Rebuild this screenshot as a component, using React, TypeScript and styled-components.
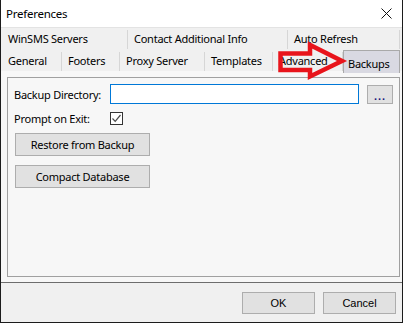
import React from "react";
import styled, { createGlobalStyle } from "styled-components";

const Global = createGlobalStyle`
  html, body { margin: 0; padding: 0; background: #ffffff; }
  body { width: 403px; height: 323px; overflow: hidden; }
  * { box-sizing: border-box; }
`;

const UI_FONT = `"Noto Sans", "Open Sans", sans-serif`;

const Window = styled.div`
  position: relative;
  width: 403px;
  height: 323px;
  border-left: 1px solid #1c1c1c;
  border-right: 1px solid #1c1c1c;
  border-bottom: 1px solid #1c1c1c;
  background: #f7f7f7;
  display: flex;
  flex-direction: column;
  font-family: ${UI_FONT};
  font-size: 11px;
  letter-spacing: -0.25px;
  color: #000;
`;

const TitleBar = styled.div`
  height: 27px;
  background: #ffffff;
  display: flex;
  align-items: center;
  justify-content: space-between;
  padding: 0 10px 1px 5px;
  font-size: 11.5px;
`;

const TabStrip = styled.div`
  background: #f0f0f0;
  border-top: 1px solid #e3e3e3;
  padding: 1px 0 0 1px;
  height: 44px;
  display: flex;
  flex-direction: column;
`;

const TabRow = styled.div<{ $h: number }>`
  display: flex;
  height: ${(p) => p.$h}px;
  align-items: flex-end;
`;

const Tab = styled.div<{ $w: number; $active?: boolean }>`
  width: ${(p) => p.$w}px;
  height: ${(p) => (p.$active ? 23 : 19)}px;
  padding-left: ${(p) => (p.$active ? 4 : 6)}px;
  padding-top: ${(p) => (p.$active ? 2 : 0)}px;
  padding-bottom: ${(p) => (p.$active ? 0 : 3)}px;
  display: flex;
  align-items: center;
  white-space: nowrap;
  overflow: hidden;
  background: ${(p) => (p.$active ? "#d9d9e2" : "transparent")};
  border-right: 1px solid ${(p) => (p.$active ? "#a9a9a9" : "#d6d6d6")};
  border-left: ${(p) => (p.$active ? "1px solid #a9a9a9" : "none")};
  border-top: ${(p) => (p.$active ? "1px solid #a9a9a9" : "none")};
  margin-bottom: ${(p) => (p.$active ? -2 : 0)}px;
  position: relative;
  z-index: ${(p) => (p.$active ? 1 : 0)};
`;

const Body = styled.div`
  flex: 1;
  padding: 6px 2px 5px 6px;
  display: flex;
`;

const Panel = styled.div`
  flex: 1;
  border: 1px solid #a0a0a0;
  background: #f7f7f7;
  padding: 6px 6px 0 6px;
  display: flex;
  flex-direction: column;
`;

const FieldRow = styled.div<{ $mt?: number }>`
  display: flex;
  align-items: center;
  height: 20px;
  margin-top: ${(p) => p.$mt ?? 0}px;
`;

const Label = styled.span`
  width: 96px;
  flex: none;
  white-space: nowrap;
`;

const TextInput = styled.div`
  width: 249px;
  height: 20px;
  background: #ffffff;
  border: 1px solid #0078d7;
`;

const BrowseButton = styled.div`
  width: 26px;
  height: 19px;
  margin-left: 8px;
  background: #e1e1e1;
  border: 1px solid #adadad;
  display: flex;
  align-items: flex-end;
  justify-content: center;
  font-family: "Liberation Sans", sans-serif;
  font-size: 11px;
  font-weight: bold;
  line-height: 14px;
  color: #1a1a7a;
  letter-spacing: 1px;
`;

const Checkbox = styled.div`
  width: 13px;
  height: 13px;
  border: 1px solid #333333;
  background: #ffffff;
  display: flex;
  align-items: center;
  justify-content: center;
`;

const PanelButton = styled.div<{ $mt: number }>`
  width: 135px;
  height: 23px;
  margin-left: 1px;
  margin-top: ${(p) => p.$mt}px;
  background: #e1e1e1;
  border: 1px solid #adadad;
  display: flex;
  align-items: center;
  justify-content: center;
  white-space: nowrap;
`;

const Separator = styled.div`
  height: 1px;
  background: #6d6d6d;
`;

const Footer = styled.div`
  height: 39px;
  background: #f0f0f0;
  display: flex;
  justify-content: flex-end;
  align-items: flex-start;
  gap: 8px;
  padding: 9px 6px 0 0;
`;

const DialogButton = styled.div`
  width: 73px;
  height: 22px;
  background: #e1e1e1;
  border: 1px solid #adadad;
  display: flex;
  align-items: center;
  justify-content: center;
  font-family: "Liberation Sans", sans-serif;
  font-size: 11px;
  letter-spacing: 0;
`;

const ArrowOverlay = styled.svg`
  position: absolute;
  left: 0;
  top: 0;
  pointer-events: none;
  z-index: 5;
`;

const row1 = [
  { label: "WinSMS Servers", w: 126 },
  { label: "Contact Additional Info", w: 160 },
  { label: "Auto Refresh", w: 112 },
];

const row2 = [
  { label: "General", w: 60 },
  { label: "Footers", w: 58 },
  { label: "Proxy Server", w: 85 },
  { label: "Templates", w: 68 },
  { label: "Advanced", w: 70 },
];

export default function App() {
  return (
    <>
      <Global />
      <Window>
        <TitleBar>
          <span>Preferences</span>
          <svg width="11" height="11" viewBox="0 0 11 11">
            <path d="M0.5 0.5 L10.5 10.5 M10.5 0.5 L0.5 10.5" stroke="#111" strokeWidth="1" fill="none" />
          </svg>
        </TitleBar>
        <TabStrip>
          <TabRow $h={20}>
            {row1.map((t) => (
              <Tab key={t.label} $w={t.w}>
                {t.label}
              </Tab>
            ))}
          </TabRow>
          <TabRow $h={22}>
            {row2.map((t) => (
              <Tab key={t.label} $w={t.w}>
                {t.label}
              </Tab>
            ))}
            <Tab $w={57} $active>
              Backups
            </Tab>
          </TabRow>
        </TabStrip>
        <Body>
          <Panel>
            <FieldRow>
              <Label>Backup Directory:</Label>
              <TextInput />
              <BrowseButton>...</BrowseButton>
            </FieldRow>
            <FieldRow $mt={4}>
              <Label>Prompt on Exit:</Label>
              <Checkbox>
                <svg width="11" height="11" viewBox="0 0 11 11">
                  <path d="M1.5 5.5 L4.2 8.3 L9.5 2" stroke="#4a4a4a" strokeWidth="1.2" fill="none" />
                </svg>
              </Checkbox>
            </FieldRow>
            <PanelButton $mt={5}>Restore from Backup</PanelButton>
            <PanelButton $mt={9}>Compact Database</PanelButton>
          </Panel>
        </Body>
        <Separator />
        <Footer>
          <DialogButton>OK</DialogButton>
          <DialogButton>Cancel</DialogButton>
        </Footer>
        <ArrowOverlay width="403" height="323" viewBox="0 0 403 323">
          <path
            d="M279.5 53.5 L309 53.5 L309 45 L341 61 L309 76.5 L309 70 L279.5 70 Z"
            stroke="#e8141b"
            strokeWidth="4.5"
            strokeLinejoin="miter"
            fill="none"
          />
        </ArrowOverlay>
      </Window>
    </>
  );
}
